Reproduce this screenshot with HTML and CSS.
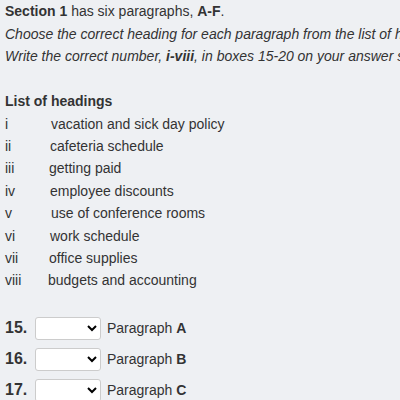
FILE: index.html
```html
<!DOCTYPE html>
<html>
<head>
<meta charset="utf-8">
<link rel="stylesheet" href="styles.css">
</head>
<body>
<div class="page">
  <p class="line"><b>Section 1</b> has six paragraphs, <b>A-F</b>.</p>
  <p class="line it">Choose the correct heading for each paragraph from the list of headings below.</p>
  <p class="line it">Write the correct number, <b>i-viii</b>, in boxes 15-20 on your answer sheet.</p>

  <div class="headings">
    <p class="line"><b>List of headings</b></p>
    <div class="item h1"><span class="num">i</span><span class="txt">vacation and sick day policy</span></div>
    <div class="item h2"><span class="num">ii</span><span class="txt">cafeteria schedule</span></div>
    <div class="item h3"><span class="num">iii</span><span class="txt">getting paid</span></div>
    <div class="item h4"><span class="num">iv</span><span class="txt">employee discounts</span></div>
    <div class="item h5"><span class="num">v</span><span class="txt">use of conference rooms</span></div>
    <div class="item h6"><span class="num">vi</span><span class="txt">work schedule</span></div>
    <div class="item h7"><span class="num">vii</span><span class="txt">office supplies</span></div>
    <div class="item h8"><span class="num">viii</span><span class="txt">budgets and accounting</span></div>
  </div>

  <div class="questions">
    <div class="q"><span class="qn">15.</span><select class="sel"><option></option></select><span class="lbl">Paragraph <b>A</b></span></div>
    <div class="q"><span class="qn">16.</span><select class="sel"><option></option></select><span class="lbl">Paragraph <b>B</b></span></div>
    <div class="q"><span class="qn">17.</span><select class="sel"><option></option></select><span class="lbl">Paragraph <b>C</b></span></div>
  </div>
</div>
</body>
</html>
```
FILE: styles.css
```css
html, body {
  margin: 0;
  padding: 0;
  background: #eef0f3;
}
body {
  font-family: "Liberation Sans", Arial, sans-serif;
  font-size: 14px;
  color: #333333;
}
.page {
  padding: 0 5px;
  white-space: nowrap;
  overflow: hidden;
}
.line {
  margin: 0;
  line-height: 22.5px;
}
.it {
  font-style: italic;
}
.headings {
  margin-top: 22.5px;
}
.item {
  display: flex;
  line-height: 22.4px;
}
.num {
  width: 45px;
}
.h1 .txt, .h5 .txt { margin-left: 1px; }
.h3 .txt, .h7 .txt { margin-left: -1px; }
.h8 .txt { margin-left: -2px; }
.questions {
  margin-top: 25px;
  display: flex;
  flex-direction: column;
  gap: 8px;
}
.q {
  display: flex;
  align-items: center;
  height: 23px;
}
.qn {
  font-weight: bold;
  font-size: 16px;
  width: 30px;
}
.sel {
  width: 66px;
  height: 23px;
  margin: 0;
  background: #fff;
  border: 1px solid #ccc;
  border-radius: 3px;
  font-size: 14px;
}
.lbl {
  margin-left: 6px;
}
```
